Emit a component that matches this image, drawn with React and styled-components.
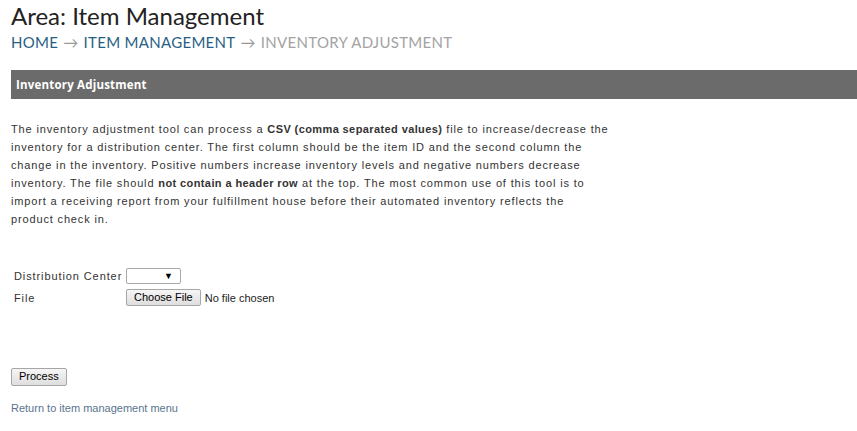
import React from 'react';
import styled, { createGlobalStyle } from 'styled-components';

const Global = createGlobalStyle`
  body {
    margin: 0;
    background: #fff;
    font-family: Arial, "Liberation Sans", sans-serif;
  }
`;

const Page = styled.div`
  padding: 2px 0 0 11px;
`;

const Title = styled.h1`
  margin: 0;
  font-family: Lato, "Open Sans", sans-serif;
  font-weight: 400;
  font-size: 24px;
  line-height: 28px;
  color: #222;
`;

const Crumbs = styled.div`
  margin-top: 2px;
  font-family: Lato, "Open Sans", sans-serif;
  font-size: 15px;
  line-height: 20px;
  letter-spacing: 0.3px;
  text-transform: uppercase;
  display: flex;
  gap: 5px;
`;

const Crumb = styled.span`
  color: ${p => (p.$current ? '#a3a3a3' : '#2a5f85')};
`;

const Arrow = styled.span`
  color: #999;
`;

const Bar = styled.div`
  margin-top: 18px;
  height: 29px;
  background: #6b6b6b;
  display: flex;
  align-items: center;
  padding-left: 5px;
  color: #fff;
  font-family: "Open Sans", sans-serif;
  font-weight: 700;
  font-size: 11.5px;
  letter-spacing: 0.2px;
`;

const Intro = styled.p`
  margin: 21px 0 0;
  white-space: nowrap;
  font-size: 11px;
  line-height: 18px;
  letter-spacing: 0.85px;
  color: #333;

  b {
    font-weight: 700;
    letter-spacing: 0.4px;
  }
`;

const Form = styled.div`
  margin-top: 40px;
  padding-left: 3px;
  display: grid;
  grid-template-columns: 112px auto;
  row-gap: 5px;
  align-items: center;
  font-size: 11px;
  letter-spacing: 0.9px;
  color: #333;
`;

const Field = styled.div`
  display: flex;
  align-items: center;
  gap: 4px;
`;

const Select = styled.div`
  box-sizing: border-box;
  width: 55px;
  height: 16px;
  border: 1px solid #a9a9a9;
  border-radius: 2px;
  background: #fff;
  display: flex;
  align-items: center;
  justify-content: flex-end;
  padding-right: 7px;
  font-size: 9px;
  letter-spacing: 0;
  color: #000;
`;

const NativeButton = styled.button`
  font-family: Arial, "Liberation Sans", sans-serif;
  font-size: 11px;
  letter-spacing: 0;
  color: #000;
  height: ${p => p.$h || 17}px;
  padding: 0 ${p => p.$px || 6}px;
  border: 1px solid #a6a6a6;
  border-radius: 2px;
  background: linear-gradient(#f6f6f6, #dedede);
  line-height: 1;
`;

const Hint = styled.span`
  color: #222;
  font-size: 11px;
  letter-spacing: 0;
`;

const Actions = styled.div`
  margin-top: 60px;
`;

const BackLink = styled.a`
  display: block;
  margin-top: 16px;
  font-size: 11px;
  color: #5a7490;
  text-decoration: none;
`;

export default function App() {
  return (
    <Page>
      <Global />
      <Title>Area: Item Management</Title>
      <Crumbs>
        <Crumb>Home</Crumb>
        <Arrow>→</Arrow>
        <Crumb>Item Management</Crumb>
        <Arrow>→</Arrow>
        <Crumb $current>Inventory Adjustment</Crumb>
      </Crumbs>
      <Bar>Inventory Adjustment</Bar>
      <Intro>
        The inventory adjustment tool can process a <b>CSV (comma separated values)</b> file to increase/decrease the<br />
        inventory for a distribution center. The first column should be the item ID and the second column the<br />
        change in the inventory. Positive numbers increase inventory levels and negative numbers decrease<br />
        inventory. The file should <b>not contain a header row</b> at the top. The most common use of this tool is to<br />
        import a receiving report from your fulfillment house before their automated inventory reflects the<br />
        product check in.
      </Intro>
      <Form>
        <span>Distribution Center</span>
        <Field>
          <Select>▼</Select>
        </Field>
        <span>File</span>
        <Field>
          <NativeButton $px={7}>Choose File</NativeButton>
          <Hint>No file chosen</Hint>
        </Field>
      </Form>
      <Actions>
        <NativeButton $h={18} $px={7}>Process</NativeButton>
      </Actions>
      <BackLink href="#">Return to item management menu</BackLink>
    </Page>
  );
}
